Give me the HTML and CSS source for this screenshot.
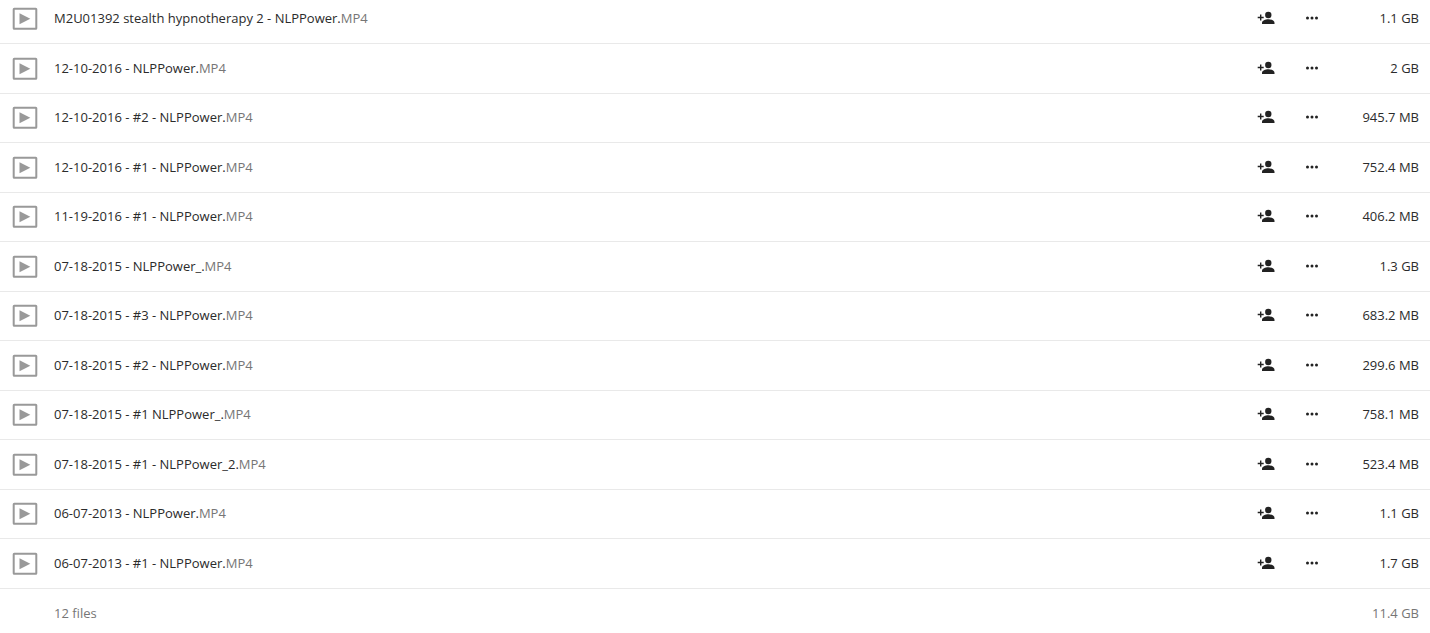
FILE: index.html
```
<!DOCTYPE html>
<html lang="en">
<head>
    <meta charset="UTF-8">
    <title>Files</title>
    <meta name="viewport" content="width=device-width, initial-scale=1.0">
    <link rel="stylesheet" href="styles.css">
</head>
<body>

    <svg class="symbols" aria-hidden="true">
        <symbol id="video" viewBox="0 0 26 24">
            <rect x="1.700" y="1.700" width="22.600" height="20" rx=".5" fill="none" stroke="#999" stroke-width="2"/>
            <path d="M7.500 6.200v11l10.800-5.500z" fill="#999"/>
        </symbol>
        <symbol id="share" viewBox="0 0 18 14">
            <circle cx="11.300" cy="4" r="3.200"/>
            <path d="M5 13v-1.300c0-2.200 3.400-3.500 6.300-3.500s6.200 1.300 6.200 3.500V13z"/>
            <path d="M3 3.500h1.400v2.300h2.300v1.400H4.400v2.300H3V7.200H.7V5.800H3z"/>
        </symbol>
        <symbol id="more" viewBox="0 0 14 4">
            <circle cx="2.500" cy="2" r="1.500"/>
            <circle cx="7" cy="2" r="1.500"/>
            <circle cx="11.500" cy="2" r="1.500"/>
        </symbol>
    </svg>

    <table class="files">
        <tbody id="rows"></tbody>
        <tfoot>
            <tr>
                <td></td>
                <td>12 files</td>
                <td colspan="3" class="size">11.4 GB</td>
            </tr>
        </tfoot>
    </table>

    <script>
    const files = [
        ['M2U01392 stealth hypnotherapy 2 - NLPPower', '1.1 GB'],
        ['12-10-2016 - NLPPower', '2 GB'],
        ['12-10-2016 - #2 - NLPPower', '945.7 MB'],
        ['12-10-2016 - #1 - NLPPower', '752.4 MB'],
        ['11-19-2016 - #1 - NLPPower', '406.2 MB'],
        ['07-18-2015 - NLPPower_', '1.3 GB'],
        ['07-18-2015 - #3 - NLPPower', '683.2 MB'],
        ['07-18-2015 - #2 - NLPPower', '299.6 MB'],
        ['07-18-2015 - #1 NLPPower_', '758.1 MB'],
        ['07-18-2015 - #1 - NLPPower_2', '523.4 MB'],
        ['06-07-2013 - NLPPower', '1.1 GB'],
        ['06-07-2013 - #1 - NLPPower', '1.7 GB']
    ];

    document.getElementById('rows').innerHTML = files.map(([name, size]) => `
        <tr>
            <td class="type"><svg class="icon-video"><use href="#video"/></svg></td>
            <td class="name"><a href="#">${name}.<span class="ext">MP4</span></a></td>
            <td class="action"><button type="button" aria-label="Share"><svg class="icon-share"><use href="#share"/></svg></button></td>
            <td class="action"><button type="button" aria-label="More"><svg class="icon-more"><use href="#more"/></svg></button></td>
            <td class="size">${size}</td>
        </tr>`).join('');
    </script>

</body>
</html>
```

FILE: styles.css
```
body {
    margin: 0;
    background: #fff;
    color: #2b2b2b;
    font-family: "Segoe UI", "Open Sans", "Noto Sans", sans-serif;
    font-size: 13px;
    line-height: 18px;
}
.symbols {
    position: absolute;
    width: 0;
    height: 0;
}
/* the list is scrolled a little past its top edge */
.files {
    width: 100%;
    margin-top: -5px;
    border-spacing: 0;
    table-layout: auto;
}
td {
    box-sizing: border-box;
    height: 49px;
    padding: 0 0 2px;
    vertical-align: middle;
}
tbody tr:nth-child(even) td {
    height: 50px;
}
tbody td {
    border-bottom: 1px solid #e9e9e9;
}
.type {
    width: 54px;
    padding: 0 0 0 12px;
}
.name a {
    color: inherit;
    text-decoration: none;
}
.name a:hover {
    text-decoration: underline;
}
.ext {
    color: #767676;
}
.action {
    width: 46px;
}
.size {
    width: 95px;
    padding-right: 11px;
    text-align: right;
    white-space: nowrap;
}
button {
    display: flex;
    align-items: center;
    justify-content: center;
    width: 46px;
    height: 32px;
    padding: 0;
    border: none;
    background: none;
    color: #222;
    cursor: pointer;
}
svg {
    display: block;
    fill: currentColor;
}
.icon-video {
    width: 26px;
    height: 24px;
}
.icon-share {
    width: 18px;
    height: 14px;
}
.icon-more {
    width: 14px;
    height: 4px;
}
tfoot td {
    height: 44px;
    padding-top: 6px;
    color: #767676;
}
```
